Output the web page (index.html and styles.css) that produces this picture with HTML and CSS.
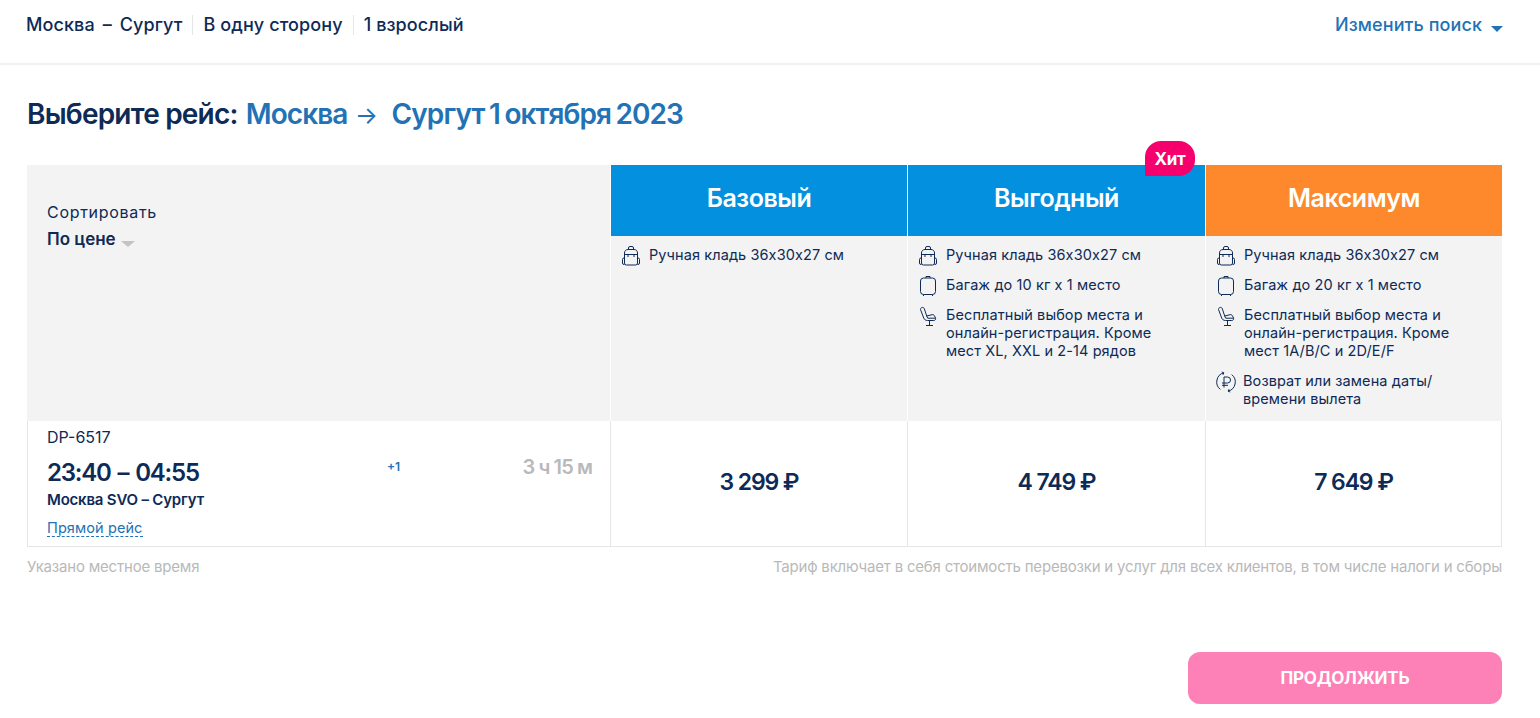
FILE: index.html
```html
<!DOCTYPE html>
<html lang="ru">
<head>
  <meta charset="UTF-8">
  <meta name="viewport" content="width=device-width, initial-scale=1.0">
  <title>Выбор рейса</title>
  <link rel="stylesheet" href="styles.css">
</head>
<body>
  <svg class="sprite" xmlns="http://www.w3.org/2000/svg">
    <symbol id="i-bag" viewBox="0 0 20 22">
      <path d="M7.500 4.500V3A1.500 1.500 0 0 1 9 1.500h2A1.500 1.500 0 0 1 12.500 3v1.500M3.500 8c0-2.200 1.500-3.500 3.500-3.500h6c2 0 3.500 1.300 3.500 3.500v10a2 2 0 0 1-2 2h-9a2 2 0 0 1-2-2zM3.500 9.500h13M7 9.500V12M13 9.500V12M3.500 13H3a1.500 1.500 0 0 0-1.500 1.500V18A1.500 1.500 0 0 0 3 19.500h.5M16.500 13h.5a1.500 1.500 0 0 1 1.500 1.500V18a1.500 1.500 0 0 1-1.500 1.500h-.5"/>
    </symbol>
    <symbol id="i-case" viewBox="0 0 20 22">
      <path d="M5.500 3h9a3 3 0 0 1 3 3v10.500a3 3 0 0 1-3 3h-9a3 3 0 0 1-3-3V6a3 3 0 0 1 3-3zM8 3V1.500h4V3M5.500 19.500V21M14.500 19.500V21"/>
    </symbol>
    <symbol id="i-seat" viewBox="0 0 20 22">
      <path d="M2.500 4.500c0-2.300 3-3 3.800-.8l2.400 7.300 5.300-1.300c1.200-.3 2 .3 2.500 1.200l1 2c.5 1.300-.3 2.600-1.700 2.600H9.500c-2 0-3.200-1-3.800-2.500zM8.700 11l1 2.200h7.500M8 20.500h7M11.500 16v4.500"/>
    </symbol>
    <symbol id="i-refund" viewBox="0 0 20 22">
      <path d="M4.300 18.400A9.500 9.500 0 0 1 7.800 1.800M15.700 3.600A9.500 9.500 0 0 1 12.200 20.200M7.800 1.800 5.800 1M7.800 1.800 7 3.800M12.200 20.200l2 .8M12.200 20.200l.8-2M8 16.500V6h3.500a3 3 0 0 1 0 6H6M6 14.300h6"/>
    </symbol>
  </svg>

  <header class="topbar">
    <div class="summary">
      <span class="summary-item summary-route">Москва – Сургут</span>
      <span class="summary-item">В одну сторону</span>
      <span class="summary-item">1 взрослый</span>
    </div>
    <a class="change-search" href="#">Изменить поиск <i class="caret"></i></a>
  </header>

  <main class="container">
    <h1 class="page-title">Выберите рейс: <span class="route">Москва <span class="arrow">→</span> Сургут 1 октября 2023</span></h1>

    <div class="fares">
      <div class="sort">
        <div class="sort-label">Сортировать</div>
        <div class="sort-value">По цене <i class="caret caret-grey"></i></div>
      </div>

      <div class="fare">
        <div class="fare-name fare-blue">Базовый</div>
        <ul class="fare-list">
          <li><svg class="icon"><use href="#i-bag"/></svg>Ручная кладь 36х30х27 см</li>
        </ul>
      </div>

      <div class="fare">
        <div class="fare-name fare-blue">Выгодный<span class="hit">Хит</span></div>
        <ul class="fare-list">
          <li><svg class="icon"><use href="#i-bag"/></svg>Ручная кладь 36х30х27 см</li>
          <li><svg class="icon"><use href="#i-case"/></svg>Багаж до 10 кг х 1 место</li>
          <li><svg class="icon"><use href="#i-seat"/></svg>Бесплатный выбор места и онлайн-регистрация. Кроме мест XL, XXL и 2-14 рядов</li>
        </ul>
      </div>

      <div class="fare fare-last">
        <div class="fare-name fare-orange">Максимум</div>
        <ul class="fare-list">
          <li><svg class="icon"><use href="#i-bag"/></svg>Ручная кладь 36х30х27 см</li>
          <li><svg class="icon"><use href="#i-case"/></svg>Багаж до 20 кг х 1 место</li>
          <li><svg class="icon"><use href="#i-seat"/></svg>Бесплатный выбор места и онлайн-регистрация. Кроме мест 1A/B/C и 2D/E/F</li>
          <li class="refund"><svg class="icon"><use href="#i-refund"/></svg>Возврат или замена даты/ времени вылета</li>
        </ul>
      </div>

      <div class="flight">
        <div class="flight-info">
          <div class="flight-no">DP-6517</div>
          <div class="flight-time">23:40 – 04:55</div>
          <div class="flight-route">Москва SVO – Сургут</div>
          <a class="flight-type" href="#">Прямой рейс</a>
        </div>
        <div class="flight-plus">+1</div>
        <div class="flight-duration">3 ч 15 м</div>
      </div>
      <div class="price">3 299 ₽</div>
      <div class="price">4 749 ₽</div>
      <div class="price price-last">7 649 ₽</div>
    </div>

    <div class="notes">
      <span>Указано местное время</span>
      <span>Тариф включает в себя стоимость перевозки и услуг для всех клиентов, в том числе налоги и сборы</span>
    </div>

    <div class="actions">
      <button class="continue">ПРОДОЛЖИТЬ</button>
    </div>
  </main>
</body>
</html>
```

FILE: styles.css
```css
body {
  font-family: Inter, 'Noto Sans', sans-serif;
  margin: 0;
  padding: 0;
  background-color: #fff;
  color: #0e2a56;
}
.sprite {
  display: none;
}
.topbar {
  height: 63px;
  padding: 0 37px 0 26px;
  display: flex;
  justify-content: space-between;
  align-items: flex-start;
  border-bottom: 2px solid #f1f1f1;
}
.summary {
  display: flex;
  margin-top: 15px;
}
.summary-item {
  font-size: 18px;
  line-height: 20px;
  letter-spacing: 0.1px;
  font-weight: 500;
  padding-right: 10px;
  margin-right: 10px;
  border-right: 1px solid #e6e6e6;
}
.summary-route {
  word-spacing: 3px;
}
.summary-item:last-child {
  border-right: none;
}
.change-search {
  margin-top: 15px;
  font-size: 18px;
  line-height: 20px;
  letter-spacing: 0.1px;
  font-weight: 500;
  color: #2272b5;
  text-decoration: none;
}
.caret {
  display: inline-block;
  width: 0;
  height: 0;
  margin-left: 4px;
  vertical-align: -1px;
  border-left: 6px solid transparent;
  border-right: 6px solid transparent;
  border-top: 6px solid #2272b5;
}
.caret-grey {
  border-left-width: 7px;
  border-right-width: 7px;
  border-top-color: #c4c4c4;
  margin-left: 1px;
  vertical-align: -2px;
}
.container {
  padding: 0 38px 0 27px;
}
.page-title {
  margin: 31px 0 33px 0;
  font-size: 28px;
  line-height: 36px;
  letter-spacing: -0.8px;
  font-weight: 600;
}
.route {
  color: #2272b5;
  letter-spacing: -0.95px;
  word-spacing: -1.5px;
  margin-left: 2px;
}
.arrow {
  font-size: 24px;
  line-height: 20px;
  font-weight: 400;
  margin: 0 10px 0 3px;
}
.fares {
  display: grid;
  grid-template-columns: 584px 297px 298px 296px;
  grid-template-rows: 256px 126px;
}
.sort {
  background-color: #f3f3f3;
  padding: 37px 0 0 20px;
  border-right: 1px solid #fff;
}
.sort-label {
  font-size: 16px;
  line-height: 20px;
  letter-spacing: 0.7px;
}
.sort-value {
  margin-top: 7px;
  font-size: 17px;
  line-height: 20px;
  font-weight: 600;
}
.fare {
  background-color: #f3f3f3;
  border-right: 1px solid #fff;
}
.fare-last {
  border-right: none;
}
.fare-name {
  position: relative;
  height: 66px;
  padding-bottom: 5px;
  display: flex;
  align-items: center;
  justify-content: center;
  font-size: 25px;
  letter-spacing: -0.45px;
  font-weight: 600;
  color: #fff;
}
.fare-blue {
  background-color: #0390df;
}
.fare-orange {
  background-color: #fd892c;
}
.hit {
  position: absolute;
  top: -24px;
  right: 10px;
  width: 50px;
  height: 35px;
  display: flex;
  align-items: center;
  justify-content: center;
  box-sizing: border-box;
  font-size: 17px;
  font-weight: 700;
  letter-spacing: -0.3px;
  background-color: #f5006d;
  border-radius: 16px 16px 16px 0;
}
.fare-list {
  list-style: none;
  margin: 0;
  padding: 10px 40px 0 38px;
}
.fare-list li {
  position: relative;
  font-size: 14.5px;
  line-height: 18px;
  letter-spacing: 0.1px;
  margin-bottom: 12px;
}
.fare-list .refund {
  margin-top: 8px;
  margin-left: -1px;
}
.icon {
  position: absolute;
  left: -28px;
  top: -1px;
  width: 20px;
  height: 22px;
  fill: none;
  stroke: #0e2a56;
  stroke-width: 1;
}
.refund .icon {
  left: -27px;
}
.flight {
  position: relative;
  border-left: 1px solid #e6e6e6;
  border-bottom: 1px solid #e6e6e6;
  border-right: 1px solid #e6e6e6;
  padding-left: 19px;
  display: flex;
}
.flight-info {
  flex: 1;
}
.flight-no {
  font-size: 16px;
  line-height: 20px;
  margin-top: 6px;
}
.flight-time {
  font-size: 24px;
  line-height: 30px;
  letter-spacing: -1.2px;
  word-spacing: 2px;
  font-weight: 600;
  margin-top: 11px;
}
.flight-route {
  font-size: 15px;
  line-height: 18px;
  letter-spacing: -0.2px;
  font-weight: 600;
  margin-top: 3px;
}
.flight-type {
  display: inline-block;
  font-size: 14.5px;
  line-height: 16px;
  letter-spacing: 0.1px;
  color: #2272b5;
  text-decoration: none;
  border-bottom: 1px dashed #2272b5;
  margin-top: 11px;
}
.flight-plus {
  position: absolute;
  left: 359px;
  top: 38px;
  font-size: 12px;
  font-weight: 600;
  color: #2272b5;
}
.flight-duration {
  margin: 34px 18px 0 0;
  font-size: 20px;
  letter-spacing: -0.9px;
  font-weight: 600;
  color: #b9b9b9;
}
.price {
  display: flex;
  align-items: center;
  justify-content: center;
  padding-bottom: 3px;
  font-size: 23px;
  letter-spacing: -1.1px;
  font-weight: 600;
  border-right: 1px solid #e6e6e6;
  border-bottom: 1px solid #e6e6e6;
}
.notes {
  display: flex;
  justify-content: space-between;
  margin-top: 11px;
  font-size: 15px;
  line-height: 18px;
  color: #b9b9b9;
  letter-spacing: -0.2px;
}
.actions {
  display: flex;
  justify-content: flex-end;
  margin-top: 76px;
}
.continue {
  width: 314px;
  height: 52px;
  border: none;
  border-radius: 12px;
  background-color: #fd80b6;
  color: #fff;
  font-family: inherit;
  font-size: 17px;
  letter-spacing: -0.2px;
  font-weight: 700;
}
```
